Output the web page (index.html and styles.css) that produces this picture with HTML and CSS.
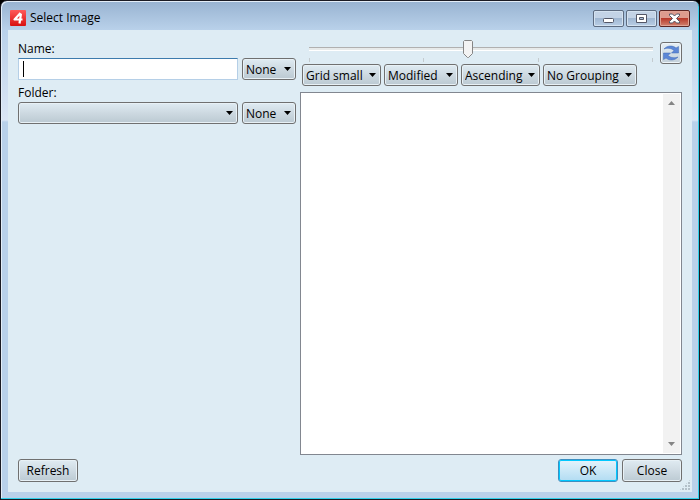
FILE: index.html
```
<!DOCTYPE html>
<html lang="en">

<head>
	<meta charset="UTF-8">
	<meta name="viewport" content="width=device-width, initial-scale=1.0">
	<title>Select Image</title>
	<link rel="stylesheet" href="styles.css">
</head>

<body>
	<div class="window">
		<header class="titlebar">
			<svg class="app-icon" viewBox="0 0 16 16">
				<defs>
					<linearGradient id="red" x1="0" y1="0" x2="0" y2="1">
						<stop offset="0" stop-color="#ff5a5a" />
						<stop offset="1" stop-color="#d81010" />
					</linearGradient>
				</defs>
				<rect width="16" height="16" rx="1" fill="url(#red)" />
				<path d="M10.5 3L4.5 9.5H12.5M11 3.500L9.500 13.500" fill="none" stroke="#fff" stroke-width="2.2" stroke-linejoin="round" />
			</svg>
			<h1>Select Image</h1>
			<div class="window-buttons">
				<button type="button" class="caption" aria-label="Minimize">
					<svg width="13" height="11" viewBox="0 0 13 11"><rect x="1.5" y="5.5" width="10" height="4" rx="1" fill="#fff" stroke="#535666" /></svg>
				</button>
				<button type="button" class="caption" aria-label="Maximize">
					<svg width="13" height="11" viewBox="0 0 13 11"><path d="M1.5 1.5h10v8h-10z" fill="#fff" stroke="#535666" /><path d="M4.5 4.5h4v2h-4z" fill="#a9bfd9" stroke="#535666" /></svg>
				</button>
				<button type="button" class="caption caption-close" aria-label="Close window">
					<svg width="13" height="11" viewBox="0 0 13 11"><path d="M1.5 1h3l2 2 2-2h3v1.500l-3 3 3 3V10h-3l-2-2-2 2h-3V8.500l3-3-3-3z" fill="#fff" stroke="#535666" /></svg>
				</button>
			</div>
		</header>

		<main class="content">
			<div class="filters">
				<label for="name">Name:</label>
				<div class="filter-row">
					<div class="text-field">
						<input type="text" id="name">
						<span class="cursor"></span>
					</div>
					<select class="group" aria-label="Name filter">
						<option>None</option>
					</select>
				</div>
				<label for="folder">Folder:</label>
				<div class="filter-row">
					<select class="folder" id="folder">
						<option></option>
					</select>
					<select class="group" aria-label="Folder filter">
						<option>None</option>
					</select>
				</div>
			</div>

			<div class="browser">
				<div class="toolbar">
					<div class="view-options">
						<div class="zoom">
							<input type="range" min="0" max="100" value="46" aria-label="Image size">
							<div class="ticks"><i></i><i></i><i></i><i></i></div>
						</div>
						<div class="sorting">
							<select class="view" aria-label="View"><option>Grid small</option></select>
							<select class="sort" aria-label="Sort by"><option>Modified</option></select>
							<select class="order" aria-label="Order"><option>Ascending</option></select>
							<select class="grouping" aria-label="Grouping"><option>No Grouping</option></select>
						</div>
					</div>
					<button type="button" class="reload" aria-label="Reload">
						<svg width="18" height="18" viewBox="0 0 18 18">
							<g fill="#5c87d6" stroke="#3f68b4" stroke-width=".5" stroke-linejoin="round">
								<path d="M2 5C5 1.500 10.500 1 14 4L16.500 2.500V9H9.500L12 6.500C9 4 5.500 3.700 2 5Z" />
								<path d="M16 13C13 16.500 7.500 17 4 14L1.500 15.500V9H8.500L6 11.500C9 14 12.500 14.300 16 13Z" />
							</g>
						</svg>
					</button>
				</div>
				<div class="image-list">
					<div class="scrollbar">
						<svg width="7" height="4" viewBox="0 0 7 4"><path d="M0 4L3.5 0L7 4Z" fill="#858585" /></svg>
						<svg width="7" height="4" viewBox="0 0 7 4"><path d="M0 0L3.5 4L7 0Z" fill="#858585" /></svg>
					</div>
				</div>
			</div>

			<footer class="actions">
				<button type="button" class="push">Refresh</button>
				<button type="button" class="push default">OK</button>
				<button type="button" class="push">Close</button>
			</footer>
			<div class="grip"></div>
		</main>
	</div>
</body>

</html>
```
FILE: styles.css
```
* {
	box-sizing: border-box;
}

body {
	margin: 0;
	background: #000;
	font-family: "Open Sans", "Noto Sans", sans-serif;
	font-size: 12px;
	color: #000;
}

.window {
	display: flex;
	flex-direction: column;
	height: 100vh;
	border: 1px solid #1b1b24;
	border-radius: 7px 7px 0 0;
	padding: 0 6px 7px;
	background: linear-gradient(#98b3d1, #b9d1ea 29px, #dbe6f5 119px, #b9d1ea 121px);
	box-shadow: inset -1px -1px #2fd0ea, inset 1px 1px #e4eef8;
}

.titlebar {
	display: flex;
	align-items: center;
	flex: none;
	height: 29px;
	padding: 5px 3px 0;
}

.app-icon {
	width: 16px;
	height: 16px;
}

h1 {
	flex: 1;
	margin: 0 0 0 4px;
	font-size: 12px;
	font-weight: normal;
	line-height: 16px;
}

.window-buttons {
	display: flex;
	gap: 2px;
}

.caption {
	display: flex;
	align-items: center;
	justify-content: center;
	width: 31px;
	height: 17px;
	padding: 0;
	border: 1px solid #5d6b80;
	border-radius: 2px;
	background: linear-gradient(#c3d3e6 45%, #a0b7d2 50%, #b9cee5);
	box-shadow: inset 0 0 0 1px #d4e2f0;
}

.caption-close {
	border-color: #5c2523;
	background: linear-gradient(#dd9b8e 45%, #b83a2b 50%, #d28270);
	box-shadow: inset 0 0 0 1px #e0a496;
}

.content {
	position: relative;
	flex: 1;
	display: grid;
	grid-template-columns: 278px 1fr;
	grid-template-rows: 1fr auto;
	gap: 4px;
	margin: 0 1px;
	padding: 10px;
	background: #deecf4;
}

/* name and folder filters */
.filters label {
	display: block;
	line-height: 18px;
}

.filter-row {
	display: flex;
	gap: 4px;
	margin-bottom: 4px;
}

.text-field {
	position: relative;
	flex: 1;
}

.text-field input {
	display: block;
	width: 100%;
	height: 22px;
	padding: 0 4px;
	border: 1px solid #b5cfe7;
	border-top-color: #3d7bad;
	outline: none;
	background: #fff;
	font: inherit;
	caret-color: transparent;
}

.cursor {
	position: absolute;
	top: 3px;
	left: 5px;
	width: 1px;
	height: 16px;
	background: #000;
}

select {
	appearance: none;
	height: 22px;
	padding: 0 0 0 3px;
	border: 1px solid #707070;
	border-radius: 3px;
	background: url("data:image/svg+xml,%3Csvg xmlns='http://www.w3.org/2000/svg' width='7' height='4'%3E%3Cpath d='M0 0h7L3.5 4z'/%3E%3C/svg%3E") no-repeat right 4px center, linear-gradient(#dfebf2, #cdd9e1 50%, #bbc9d2);
	box-shadow: inset 0 0 0 1px #e8f1f6;
	color: #000;
	font: inherit;
}

.folder {
	flex: 1;
}

.group {
	width: 54px;
}

.view {
	width: 79px;
}

.sort {
	width: 74px;
}

.order {
	width: 79px;
}

.grouping {
	width: 94px;
}

/* image browser */
.browser {
	display: flex;
	flex-direction: column;
}

.toolbar {
	display: flex;
	gap: 2px;
	height: 52px;
}

.view-options {
	flex: 1;
}

.zoom {
	height: 24px;
	padding: 0 0 0 4px;
}

.zoom input {
	appearance: none;
	display: block;
	width: 100%;
	height: 18px;
	margin: 0;
	background: transparent;
}

.zoom input::-webkit-slider-runnable-track {
	height: 4px;
	margin: 0 5px;
	border-top: 1px solid #b0b0b0;
	border-bottom: 1px solid #fff;
	background: #e7eaea;
}

.zoom input::-webkit-slider-thumb {
	appearance: none;
	width: 10px;
	height: 18px;
	margin-top: -8px;
	background: url("data:image/svg+xml,%3Csvg xmlns='http://www.w3.org/2000/svg' width='10' height='18'%3E%3Cpath d='M1.5.5h7l1 1v12l-4 4h-1l-4-4v-12z' fill='%23f3f3f3' stroke='%23858585'/%3E%3C/svg%3E");
}

.ticks {
	display: flex;
	justify-content: space-between;
	padding: 0 5px;
}

.ticks i {
	width: 1px;
	height: 4px;
	background: #c4cbcf;
}

.sorting {
	display: flex;
	gap: 3px;
	padding-left: 2px;
}

.reload {
	display: flex;
	align-items: center;
	justify-content: center;
	width: 22px;
	height: 22px;
	margin-top: 2px;
	padding: 0;
	border: 1px solid #707070;
	border-radius: 3px;
	background: linear-gradient(#e6eff5, #c3d0d9);
	box-shadow: inset 0 0 0 1px #eef5f9;
}

.image-list {
	display: flex;
	justify-content: flex-end;
	flex: 1;
	padding: 1px;
	border: 1px solid #828790;
	background: #fff;
}

.scrollbar {
	display: flex;
	flex-direction: column;
	align-items: center;
	justify-content: space-between;
	width: 17px;
	padding: 7px 0;
	background: #f2f2f2;
}

/* bottom buttons */
.actions {
	grid-column: 1 / -1;
	display: flex;
	gap: 4px;
}

.push {
	width: 60px;
	height: 23px;
	padding: 0;
	border: 1px solid #707070;
	border-radius: 3px;
	background: linear-gradient(#e0ebf2, #cfdbe3 50%, #bccad3);
	box-shadow: inset 0 0 0 1px #e8f1f6;
	color: #000;
	font: inherit;
}

.default {
	margin-left: auto;
	border-color: #3c8fc1;
	background: linear-gradient(#e4f3fb, #cbe8f7 50%, #b2dcf2);
	box-shadow: inset 0 0 0 1px #00c8ff;
}

.grip {
	position: absolute;
	right: 1px;
	bottom: 1px;
	width: 12px;
	height: 12px;
	background: radial-gradient(circle at 1px 1px, #b3c0c9 1px, transparent 1px) 0 0 / 3px 3px;
	clip-path: polygon(100% 0, 100% 100%, 0 100%);
}
```
